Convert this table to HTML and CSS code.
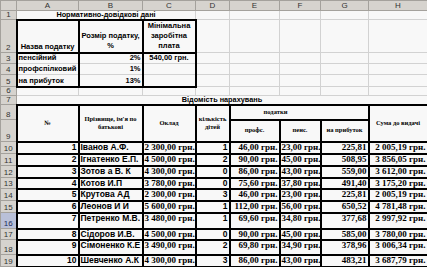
FILE: index.html
```html
<!DOCTYPE html>
<html lang="uk">
<head>
<meta charset="utf-8">
<title>Відомість нарахувань</title>
<link rel="stylesheet" href="styles.css">
</head>
<body>
<table class="sheet">
  <colgroup>
    <col class="w-rh"><col class="w-a"><col class="w-b"><col class="w-c"><col class="w-d"><col class="w-e"><col class="w-f"><col class="w-g"><col class="w-h">
  </colgroup>
  <tr class="h10">
    <th class="hd"></th><th class="hd">A</th><th class="hd">B</th><th class="hd">C</th><th class="hd">D</th><th class="hd">E</th><th class="hd">F</th><th class="hd">G</th><th class="hd">H</th>
  </tr>
  <tr class="h9">
    <th class="rh">1</th><td colspan="3" class="title">Нормативно-довідкові дані</td><td></td><td></td><td></td><td></td><td></td>
  </tr>
  <tr class="h33 top">
    <th class="rh">2</th>
    <td class="bx ctr">Назва податку</td>
    <td class="bx ctr wrap">Розмір податку,<br>%</td>
    <td class="bx ctr wrap">Мінімальна<br>заробітна<br>плата</td>
    <td></td><td></td><td></td><td></td><td></td>
  </tr>
  <tr class="h11 top">
    <th class="rh">3</th><td class="bl br">пенсійний</td><td class="br rt">2%</td><td class="br ctr">540,00 грн.</td><td></td><td></td><td></td><td></td><td></td>
  </tr>
  <tr class="h11 top">
    <th class="rh">4</th><td class="bl br">профспілковий</td><td class="br rt">1%</td><td class="br"></td><td></td><td></td><td></td><td></td><td></td>
  </tr>
  <tr class="h12 top">
    <th class="rh">5</th><td class="bl br bb">на прибуток</td><td class="br bb rt">13%</td><td class="br bb"></td><td></td><td></td><td></td><td></td><td></td>
  </tr>
  <tr class="h9">
    <th class="rh">6</th><td></td><td></td><td></td><td></td><td></td><td></td><td></td><td></td>
  </tr>
  <tr class="h9">
    <th class="rh">7</th><td colspan="8" class="title">Відомість нарахувань</td>
  </tr>
  <tr class="h15">
    <th class="rh">8</th>
    <td rowspan="2" class="bx th">№</td>
    <td rowspan="2" class="bx th">Прізвище, ім'я по<br>батькові</td>
    <td rowspan="2" class="bx th">Оклад</td>
    <td rowspan="2" class="bx th">кількість<br>дітей</td>
    <td colspan="3" class="bx th tax">податки</td>
    <td rowspan="2" class="bx th">Сума до видачі</td>
  </tr>
  <tr class="h22">
    <th class="rh">9</th>
    <td class="bx th">профс.</td><td class="bx th">пенс.</td><td class="bx th">на прибуток</td>
  </tr>
  <tr class="h12 data"><th class="rh">10</th><td class="bx rt">1</td><td class="bx">Іванов А.Ф.</td><td class="bx num lt">2 300,00 грн.</td><td class="bx rt">1</td><td class="bx num">46,00 грн.</td><td class="bx num">23,00 грн.</td><td class="bx num">225,81</td><td class="bx num">2 005,19 грн.</td></tr>
  <tr class="h12 data"><th class="rh">11</th><td class="bx rt">2</td><td class="bx">Ігнатенко Е.П.</td><td class="bx num lt">4 500,00 грн.</td><td class="bx rt">2</td><td class="bx num">90,00 грн.</td><td class="bx num">45,00 грн.</td><td class="bx num">508,95</td><td class="bx num">3 856,05 грн.</td></tr>
  <tr class="h12 data"><th class="rh">12</th><td class="bx rt">3</td><td class="bx">Зотов а В. К</td><td class="bx num lt">4 300,00 грн.</td><td class="bx rt">0</td><td class="bx num">86,00 грн.</td><td class="bx num">43,00 грн.</td><td class="bx num">559,00</td><td class="bx num">3 612,00 грн.</td></tr>
  <tr class="h11 data"><th class="rh">13</th><td class="bx rt">4</td><td class="bx">Котов И.П</td><td class="bx num lt">3 780,00 грн.</td><td class="bx rt">0</td><td class="bx num">75,60 грн.</td><td class="bx num">37,80 грн.</td><td class="bx num">491,40</td><td class="bx num">3 175,20 грн.</td></tr>
  <tr class="h12 data"><th class="rh">14</th><td class="bx rt">5</td><td class="bx">Крутова АД</td><td class="bx num lt">2 300,00 грн.</td><td class="bx rt">3</td><td class="bx num">46,00 грн.</td><td class="bx num">23,00 грн.</td><td class="bx num">225,81</td><td class="bx num">2 005,19 грн.</td></tr>
  <tr class="h12 data"><th class="rh">15</th><td class="bx rt">6</td><td class="bx">Леонов И И</td><td class="bx num lt">5 600,00 грн.</td><td class="bx rt">1</td><td class="bx num">112,00 грн.</td><td class="bx num">56,00 грн.</td><td class="bx num">650,52</td><td class="bx num">4 781,48 грн.</td></tr>
  <tr class="h16 data"><th class="rh sel">16</th><td class="bx rt">7</td><td class="bx">Петренко М.В.</td><td class="bx num lt">3 480,00 грн.</td><td class="bx rt">1</td><td class="bx num">69,60 грн.</td><td class="bx num">34,80 грн.</td><td class="bx num">377,68</td><td class="bx num">2 997,92 грн.</td></tr>
  <tr class="h11 data"><th class="rh">17</th><td class="bx rt">8</td><td class="bx">Сідоров И.В.</td><td class="bx num lt">4 500,00 грн.</td><td class="bx rt">0</td><td class="bx num">90,00 грн.</td><td class="bx num">45,00 грн.</td><td class="bx num">585,00</td><td class="bx num">3 780,00 грн.</td></tr>
  <tr class="h15 data"><th class="rh">18</th><td class="bx rt">9</td><td class="bx">Сімоненко К.Е</td><td class="bx num lt">3 490,00 грн.</td><td class="bx rt">2</td><td class="bx num">69,80 грн.</td><td class="bx num">34,90 грн.</td><td class="bx num">378,96</td><td class="bx num">3 006,34 грн.</td></tr>
  <tr class="h12 data"><th class="rh">19</th><td class="bx rt">10</td><td class="bx">Шевченко А.К</td><td class="bx num lt">4 300,00 грн.</td><td class="bx rt">3</td><td class="bx num">86,00 грн.</td><td class="bx num">43,00 грн.</td><td class="bx num">483,21</td><td class="bx num">3 687,79 грн.</td></tr>
  <tr class="h12"><th class="rh"></th><td></td><td></td><td></td><td></td><td></td><td></td><td></td><td></td></tr>
</table>
</body>
</html>
```
FILE: styles.css
```css
html, body {
  margin: 0;
  padding: 0;
}
body {
  width: 427px;
  height: 267px;
  overflow: hidden;
  background: #f8f8f8;
}
.sheet {
  border-collapse: collapse;
  table-layout: fixed;
  width: 427px;
  font-family: "Liberation Sans", Arial, sans-serif;
  font-size: 8px;
  font-weight: bold;
  color: #000;
  background: #f8f8f8;
}
.w-rh { width: 16px; }
.w-a { width: 62px; }
.w-b { width: 64px; }
.w-c { width: 53px; }
.w-d { width: 34px; }
.w-e { width: 50px; }
.w-f { width: 41px; }
.w-g { width: 48px; }
.w-h { width: 59px; }

.h9 { height: 9px; }
.h10 { height: 10px; }
.h11 { height: 11px; }
.h12 { height: 12px; }
.h15 { height: 15px; }
.h16 { height: 16px; }
.h22 { height: 22px; }
.h33 { height: 33px; }

.sheet td {
  border: 1px solid #d2d2d2;
  padding: 0 1px;
  white-space: nowrap;
  overflow: hidden;
  vertical-align: bottom;
  line-height: 8px;
}
.hd,
.rh {
  background: #d6d3ce;
  border: 1px solid #a4a19c;
  color: #333;
  font-weight: normal;
  font-size: 8px;
  line-height: 7px;
  padding: 0;
  text-align: center;
  vertical-align: middle;
}
.rh {
  vertical-align: bottom;
  padding-bottom: 1px;
}
.rh.sel {
  background: #b9c0d8;
  color: #1c2a5a;
}
.sheet td.title {
  text-align: center;
  vertical-align: middle;
  font-size: 7.3px;
  line-height: 6px;
}
.top td { font-size: 7.5px; padding-bottom: 1px; }
.sheet td.bx { border: 2px solid #000; }
.sheet td.bl { border-left: 2px solid #000; }
.sheet td.br { border-right: 2px solid #000; }
.sheet td.bb { border-bottom: 2px solid #000; }
.ctr { text-align: center; }
.rt { text-align: right; }
.lt { text-align: left; }
.sheet .top td.wrap { padding-bottom: 1px; line-height: 10px; }
.sheet td.th {
  font-family: "Liberation Serif", "Times New Roman", serif;
  font-size: 6.5px;
  line-height: 8.5px;
  text-align: center;
  vertical-align: middle;
}
.sheet td.tax { padding-right: 48px; }
.data td { vertical-align: top; font-size: 8.5px; }
.sheet .data td.num {
  font-family: "Liberation Serif", "Times New Roman", serif;
  font-size: 9px;
  text-align: right;
}
.sheet .data td.num.lt { text-align: left; }
```
